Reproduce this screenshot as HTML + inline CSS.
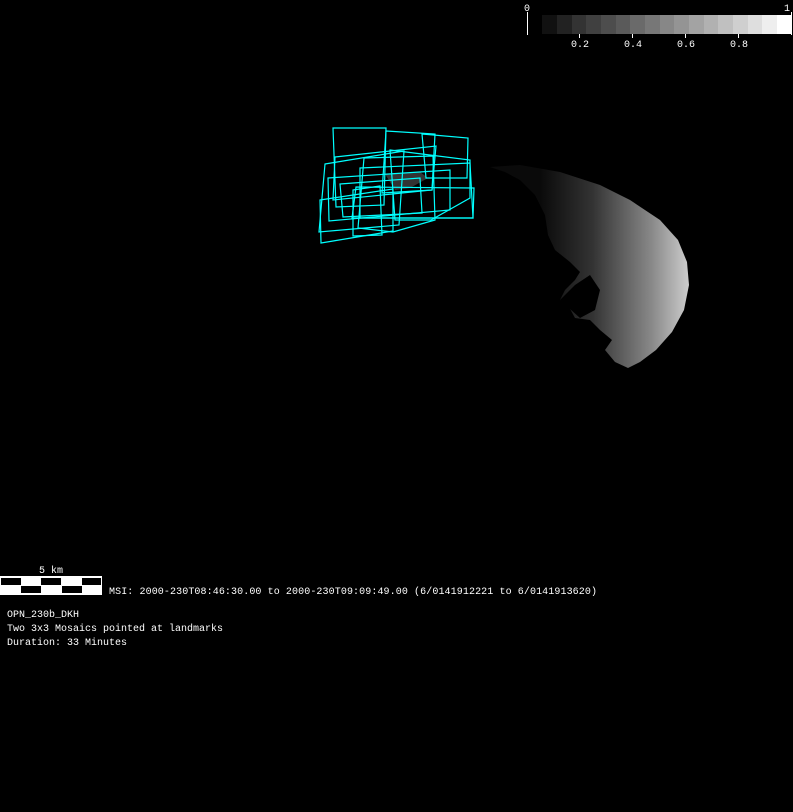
<!DOCTYPE html>
<html><head><style>
html,body{margin:0;padding:0;background:#000;width:793px;height:812px;overflow:hidden}
svg{display:block}
text{font-family:"Liberation Mono","DejaVu Sans Mono",monospace;font-size:10px;fill:#fff}
</style></head><body>
<svg width="793" height="812" viewBox="0 0 793 812" xmlns="http://www.w3.org/2000/svg">
<defs>
<linearGradient id="g" x1="540" y1="0" x2="690" y2="0" gradientUnits="userSpaceOnUse">
<stop offset="0" stop-color="#0a0a0a"/><stop offset="0.35" stop-color="#333"/><stop offset="0.75" stop-color="#8a8a8a"/><stop offset="1" stop-color="#cfcfcf"/>
</linearGradient>
</defs>
<g>
<rect x="542" y="15" width="15" height="19" fill="#111"/>
<rect x="557" y="15" width="15" height="19" fill="#222"/>
<rect x="572" y="15" width="14" height="19" fill="#333"/>
<rect x="586" y="15" width="15" height="19" fill="#404040"/>
<rect x="601" y="15" width="15" height="19" fill="#4d4d4d"/>
<rect x="616" y="15" width="14" height="19" fill="#5a5a5a"/>
<rect x="630" y="15" width="15" height="19" fill="#6a6a6a"/>
<rect x="645" y="15" width="15" height="19" fill="#777"/>
<rect x="660" y="15" width="14" height="19" fill="#878787"/>
<rect x="674" y="15" width="15" height="19" fill="#949494"/>
<rect x="689" y="15" width="15" height="19" fill="#a3a3a3"/>
<rect x="704" y="15" width="14" height="19" fill="#b1b1b1"/>
<rect x="718" y="15" width="15" height="19" fill="#c0c0c0"/>
<rect x="733" y="15" width="15" height="19" fill="#cfcfcf"/>
<rect x="748" y="15" width="14" height="19" fill="#dedede"/>
<rect x="762" y="15" width="15" height="19" fill="#eee"/>
<rect x="777" y="15" width="15" height="19" fill="#fff"/>
</g>
<line x1="527.5" y1="12" x2="527.5" y2="35" stroke="#fff"/>
<line x1="791.5" y1="12" x2="791.5" y2="35" stroke="#fff"/>
<g stroke="#fff"><line x1="579.5" y1="34" x2="579.5" y2="38"/><line x1="632.5" y1="34" x2="632.5" y2="38"/><line x1="685.5" y1="34" x2="685.5" y2="38"/><line x1="738.5" y1="34" x2="738.5" y2="38"/></g>
<text x="524" y="11">0</text><text x="784" y="11">1</text>
<text x="571" y="47">0.2</text><text x="624" y="47">0.4</text><text x="677" y="47">0.6</text><text x="730" y="47">0.8</text>
<path d="M490,167 L520,165 L560,172 L600,185 L630,200 L660,220 L678,240 L687,262 L689,285 L684,310 L672,332 L656,350 L640,362 L628,368 L615,362 L605,350 L612,340 L600,330 L590,320 L575,318 L568,305 L560,300 L565,290 L575,280 L580,272 L570,262 L555,250 L548,235 L545,215 L535,195 L520,180 L505,172 Z" fill="url(#g)"/>
<path d="M560,300 L575,285 L590,275 L600,290 L595,310 L580,318 Z" fill="#000"/>
<path d="M385,174 L420,172 L428,178 L410,188 L395,190 Z" fill="#333"/>
<g fill="none" stroke="#0ff" stroke-width="1.2">
<path d="M333,128 L386,128 L384,205 L336,207 Z"/>
<path d="M386,131 L435,134 L432,190 L382,193 Z"/>
<path d="M422,134 L468,138 L467,178 L426,178 Z"/>
<path d="M335,157 L436,146 L432,190 L333,200 Z"/>
<path d="M325,164 L404,151 L399,225 L319,232 Z"/>
<path d="M320,200 L393,189 L393,231 L321,243 Z"/>
<path d="M340,184 L420,178 L422,213 L343,217 Z"/>
<path d="M360,168 L470,163 L473,218 L360,218 Z"/>
<path d="M356,187 L474,188 L473,218 L352,218 Z"/>
<path d="M364,158 L433,156 L435,220 L393,232 L358,228 Z"/>
<path d="M328,178 L450,170 L450,210 L329,221 Z"/>
<path d="M390,150 L470,160 L470,198 L431,220 L395,220 Z"/>
<path d="M353,190 L380,186 L382,235 L353,236 Z"/>
</g>
<rect x="0.5" y="576.5" width="101" height="18" fill="#fff" stroke="#fff"/>
<g fill="#000">
<rect x="1" y="578" width="20" height="7"/><rect x="41" y="578" width="20" height="7"/><rect x="82" y="578" width="19" height="7"/>
<rect x="21" y="586" width="20" height="7"/><rect x="62" y="586" width="20" height="7"/>
</g>
<text x="39" y="573">5 km</text>
<text x="109" y="594" textLength="488" lengthAdjust="spacing">MSI:  2000-230T08:46:30.00 to 2000-230T09:09:49.00 (6/0141912221 to 6/0141913620)</text>
<text x="7" y="617">OPN_230b_DKH</text>
<text x="7" y="631">Two 3x3 Mosaics pointed at landmarks</text>
<text x="7" y="645">Duration: 33 Minutes</text>
</svg>
</body></html>
